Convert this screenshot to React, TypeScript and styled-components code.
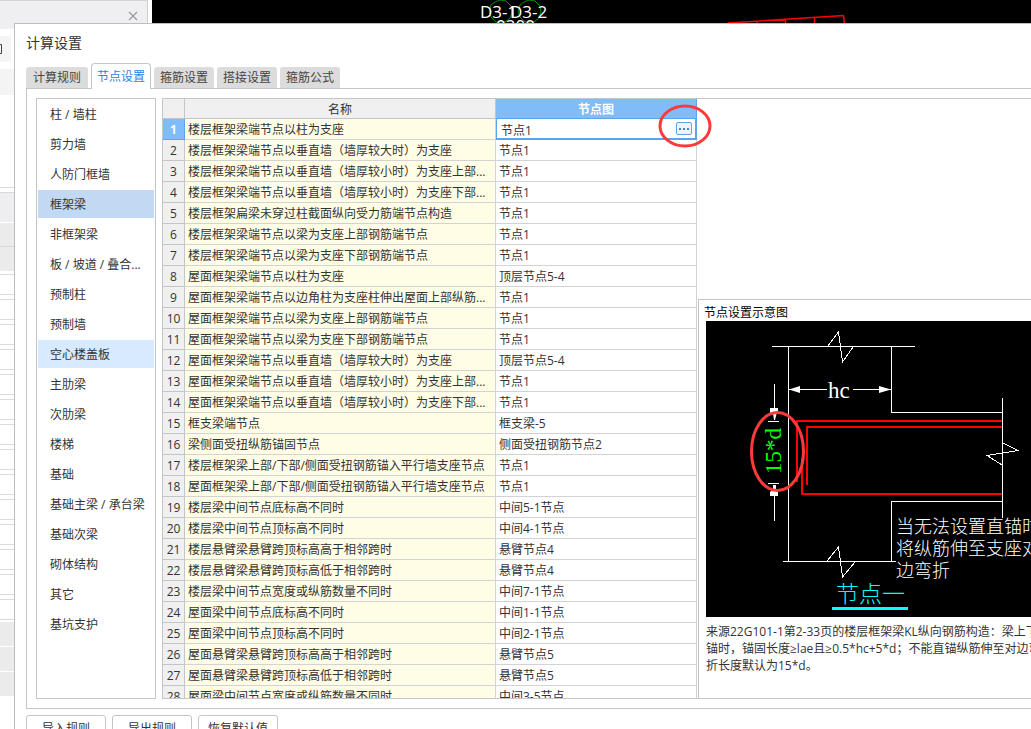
import React, { useState } from "react";
import styled, { createGlobalStyle, css } from "styled-components";

const GlobalStyle = createGlobalStyle`
  *, *::before, *::after { box-sizing: border-box; }
  body {
    margin: 0;
    background: #fff;
    color: #333;
    font: 12px/20px "Open Sans", "Noto Sans CJK SC", sans-serif;
  }
  button, input { font: inherit; color: inherit; }
`;

const line = "#c3c5c8";
const blue = "#5ba3ea";
const lightBlue = "#80bbfa";
const annotation = "#fb3b3b";

const Screen = styled.div`
  display: flex;
  flex-direction: column;
  height: 100vh;
  overflow: hidden;
`;

const Backdrop = styled.div`
  display: flex;
  gap: 4px;
  flex: none;
  height: 23px;
`;

const DockHeader = styled.div`
  display: flex;
  align-items: center;
  justify-content: flex-end;
  width: 148px;
  padding: 8px 9px 0 0;
  background: #efeff1;
  border-top: 1px solid #d4d4d6;
  border-right: 1px solid #cfcfd1;
`;

const CloseButton = styled.button`
  display: flex;
  padding: 0;
  border: 0;
  background: none;
`;

const ModelView = styled.div`
  flex: 1;
  overflow: hidden;
  background: #000;

  svg { display: block; }
`;

const Body = styled.div`
  display: flex;
  flex: 1;
  min-height: 0;
`;

const Dock = styled.div`
  flex: none;
  width: 14px;
`;

const DockBlock = styled.div<{ $h: number; $bg?: string; $top?: boolean; $bottom?: boolean }>`
  height: ${(p) => p.$h}px;
  background: ${(p) => p.$bg ?? "#fff"};
  border-top: ${(p) => (p.$top ? "1px solid #d9d9d9" : 0)};
  border-bottom: ${(p) => (p.$bottom ? "1px solid #d9d9d9" : 0)};
`;

const DockTool = styled.div`
  display: flex;
  align-items: center;
  width: 11px;
  height: 26px;
  margin: 7px 0;
  background: #f4f4f5;
  border-radius: 0 3px 3px 0;
`;

const DockRow = styled.div`
  height: 21px;
  margin-bottom: 4px;
  border: solid #dcdcdc;
  border-width: 1px 0;
`;

const Dialog = styled.section`
  flex: 1;
  min-width: 0;
  padding-left: 11px;
  background: #fff;
  border-top: 1px solid #bdbdbf;
  border-left: 1px solid #bdbdbf;
`;

const Title = styled.h1`
  margin: 0;
  padding-bottom: 2px;
  font-size: 14px;
  line-height: 37px;
  font-weight: 400;
`;

const Tabs = styled.div`
  display: flex;
  align-items: flex-end;
  gap: 3px;
  height: 25px;
`;

const Tab = styled.button<{ $active: boolean }>`
  height: 21px;
  padding: 0 6px;
  line-height: 21px;
  color: #444;
  background: #dcdcdc;
  border: 0;
  border-radius: 3px 3px 0 0;

  &:first-child { padding: 0 7px; }

  ${(p) =>
    p.$active &&
    css`
      z-index: 1;
      height: 26px;
      margin-bottom: -1px;
      padding: 0 5px;
      color: #2b82e6;
      background: #fff;
      border: 1px solid ${line};
      border-bottom: 0;
      border-radius: 4px 4px 0 0;
    `}
`;

const Panel = styled.div`
  display: flex;
  gap: 6px;
  height: calc(100vh - 108px);
  padding: 9px 0 9px 9px;
  border: 1px solid ${line};
  border-right: 0;
`;

const Categories = styled.nav`
  display: flex;
  flex-direction: column;
  gap: 2px;
  flex: none;
  width: 120px;
  padding: 1px;
  overflow: hidden;
  border: 1px solid ${line};
`;

const Category = styled.button<{ $state?: "selected" | "hover" }>`
  flex: none;
  height: 28px;
  padding: 2px 0 0 12px;
  text-align: left;
  white-space: nowrap;
  border: 0;
  background: ${(p) =>
    p.$state === "selected" ? "#c1d9f2" : p.$state === "hover" ? "#d8eaff" : "transparent"};
`;

const Panes = styled.div`
  display: flex;
  gap: 1px;
  flex: 1;
  min-width: 0;
  border: solid ${line};
  border-width: 1px 0;
`;

const GridPane = styled.div`
  z-index: 1;
  flex: none;
  width: 535px;
  overflow-x: visible;
  overflow-y: clip;
  border-left: 1px solid ${line};
`;

const Grid = styled.table`
  width: 100%;
  table-layout: fixed;
  border-collapse: separate;
  border-spacing: 0;
  line-height: 18px;
`;

const HeadCell = styled.th<{ $active?: boolean; $w: number }>`
  width: ${(p) => p.$w}px;
  height: 20px;
  padding: 2px 0 0;
  line-height: 17px;
  font-weight: ${(p) => (p.$active ? 700 : 400)};
  color: ${(p) => (p.$active ? "#fff" : "#333")};
  background: ${(p) => (p.$active ? lightBlue : "#f0f0f0")};
  border: solid ${(p) => (p.$active ? blue : line)};
  border-width: 0 1px 1px 0;
`;

const RowNumber = styled.th<{ $active: boolean }>`
  height: 21px;
  padding: 2px 0 0;
  font-weight: ${(p) => (p.$active ? 700 : 400)};
  color: ${(p) => (p.$active ? "#fff" : "#333")};
  background: ${(p) => (p.$active ? lightBlue : "#f0f0f0")};
  border: solid ${(p) => (p.$active ? blue : line)};
  border-width: 0 1px 1px 0;
`;

const Cell = styled.td<{ $tinted?: boolean }>`
  height: 21px;
  padding: 2px 0 0 3px;
  white-space: nowrap;
  background: ${(p) => (p.$tinted ? "#fffde6" : "#fff")};
  border: solid #d3d3d3;
  border-width: 0 1px 1px 0;
`;

const EditCell = styled.td`
  position: relative;
  height: 21px;
  padding: 0;
`;

const Editor = styled.div`
  display: flex;
  align-items: center;
  height: 21px;
  padding-right: 3px;
  border: 1px solid ${blue};
  border-width: 0 2px 2px 1px;
`;

const EditInput = styled.input`
  flex: 1;
  min-width: 0;
  height: 19px;
  padding: 2px 0 0 4px;
  border: 0;
  outline: 0;
  background: none;
`;

const MoreButton = styled.button`
  display: flex;
  align-items: center;
  justify-content: center;
  gap: 2px;
  width: 16px;
  height: 13px;
  padding: 0;
  background: #eef3fa;
  border: 1px solid ${blue};
  border-radius: 2px;

  span { width: 2px; height: 2px; background: #3f86d8; }
`;

const Highlight = styled.svg`
  position: absolute;
  top: -15px;
  right: -15px;
  pointer-events: none;
`;

const SidePane = styled.div`
  display: flex;
  flex-direction: column;
  flex: 1;
  min-width: 0;
  padding-top: 200px;
`;

const Preview = styled.figure`
  flex: 1;
  min-height: 0;
  margin: 0;
  padding: 4px 0 0 7px;
  overflow: hidden;
  border: solid ${line};
  border-width: 1px 0 0 1px;
`;

const PreviewTitle = styled.h2`
  margin: 0 0 0 -2px;
  font-size: 12px;
  line-height: 17px;
  font-weight: 400;
  color: #000;
`;

const Drawing = styled.svg`
  display: block;
  background: #000;
`;

const Note = styled.figcaption`
  padding-top: 6px;
  line-height: 17px;
  white-space: nowrap;
`;

const Actions = styled.div`
  display: flex;
  gap: 6px;
  padding-top: 6px;
`;

const ActionButton = styled.button`
  width: 80px;
  height: 26px;
  padding: 2px 0 0;
  background: #fff;
  border: 1px solid ${line};
  border-radius: 3px;
`;

const tabs = ["计算规则", "节点设置", "箍筋设置", "搭接设置", "箍筋公式"];

const categories = [
  "柱 / 墙柱", "剪力墙", "人防门框墙", "框架梁", "非框架梁", "板 / 坡道 / 叠合...",
  "预制柱", "预制墙", "空心楼盖板", "主肋梁", "次肋梁", "楼梯", "基础",
  "基础主梁 / 承台梁", "基础次梁", "砌体结构", "其它", "基坑支护",
];

const rows: [string, string][] = [
  ["楼层框架梁端节点以柱为支座", "节点1"],
  ["楼层框架梁端节点以垂直墙（墙厚较大时）为支座", "节点1"],
  ["楼层框架梁端节点以垂直墙（墙厚较小时）为支座上部...", "节点1"],
  ["楼层框架梁端节点以垂直墙（墙厚较小时）为支座下部...", "节点1"],
  ["楼层框架扁梁未穿过柱截面纵向受力筋端节点构造", "节点1"],
  ["楼层框架梁端节点以梁为支座上部钢筋端节点", "节点1"],
  ["楼层框架梁端节点以梁为支座下部钢筋端节点", "节点1"],
  ["屋面框架梁端节点以柱为支座", "顶层节点5-4"],
  ["屋面框架梁端节点以边角柱为支座柱伸出屋面上部纵筋...", "节点1"],
  ["屋面框架梁端节点以梁为支座上部钢筋端节点", "节点1"],
  ["屋面框架梁端节点以梁为支座下部钢筋端节点", "节点1"],
  ["屋面框架梁端节点以垂直墙（墙厚较大时）为支座", "顶层节点5-4"],
  ["屋面框架梁端节点以垂直墙（墙厚较小时）为支座上部...", "节点1"],
  ["屋面框架梁端节点以垂直墙（墙厚较小时）为支座下部...", "节点1"],
  ["框支梁端节点", "框支梁-5"],
  ["梁侧面受扭纵筋锚固节点", "侧面受扭钢筋节点2"],
  ["楼层框架梁上部/下部/侧面受扭钢筋锚入平行墙支座节点", "节点1"],
  ["屋面框架梁上部/下部/侧面受扭钢筋锚入平行墙支座节点", "节点1"],
  ["楼层梁中间节点底标高不同时", "中间5-1节点"],
  ["楼层梁中间节点顶标高不同时", "中间4-1节点"],
  ["楼层悬臂梁悬臂跨顶标高高于相邻跨时", "悬臂节点4"],
  ["楼层悬臂梁悬臂跨顶标高低于相邻跨时", "悬臂节点4"],
  ["楼层梁中间节点宽度或纵筋数量不同时", "中间7-1节点"],
  ["屋面梁中间节点底标高不同时", "中间1-1节点"],
  ["屋面梁中间节点顶标高不同时", "中间2-1节点"],
  ["屋面悬臂梁悬臂跨顶标高高于相邻跨时", "悬臂节点5"],
  ["屋面悬臂梁悬臂跨顶标高低于相邻跨时", "悬臂节点5"],
  ["屋面梁中间节点宽度或纵筋数量不同时", "中间3-5节点"],
];

function ModelDrawing() {
  return (
    <svg width="879" height="23" viewBox="152 0 879 23">
      <g fill="none" stroke="#0a8a0a" strokeWidth="1">
        <path d="M495 2l5-2 6 1 5 5 1 6-2 6-5 4h-9l-5-5-2-6 2-6z" />
        <path d="M524 2l5-2 6 1 5 5 1 6-2 6-5 4h-9l-5-5-2-6 2-6z" />
      </g>
      <g fill="#fff" fontFamily="Open Sans, sans-serif" fontSize="17">
        <text x="480" y="18">D3-1</text>
        <text x="510" y="18">D3-2</text>
        <text x="496" y="32">0200</text>
      </g>
      <path
        d="M728 23L844 15.500M757 23v-2M785.500 23v-3.500M814.500 23v-5M843.500 15.500l1 8"
        fill="none"
        stroke="#f00"
        strokeWidth="1.500"
      />
    </svg>
  );
}

/** Beam end node: column outline, bent bars and the anchorage dimension. */
function NodeDrawing() {
  return (
    <Drawing width="420" height="296" viewBox="706 321 420 296" role="img" aria-label="节点一">
      <g fill="none" stroke="#fff" strokeWidth="1" shapeRendering="crispEdges">
        <path d="M772 346.500H915M788.500 346V561M891.500 346V412.500H1002M1002.500 398V518M1002 501.500H891.500V561M783 561.500H896" />
        <path d="M828 346L838.500 332L842.500 362L853 347M827 561L838.500 547L842.500 577L855 562M1003 443L1018 450.500L987 455.500L1002 465" />
        <path d="M789 389.500H827M853 389.500H891M774.500 384V410M774.500 495V521M768 421.500H779M768 483.500H779" />
      </g>
      <g fill="#fff">
        <path d="M789 389.500L800 386v7zM891 389.500L879 386v7z" />
        <path d="M770 408h8v4h-1l-2 8h-1l-1-7h-3zM773 485h3v5l2 2v4h-8v-4l3-2z" />
      </g>
      <g fill="none" stroke="#f00" strokeWidth="2" shapeRendering="crispEdges">
        <path d="M1002 421H797V482" />
        <path d="M1002 427H807V485" />
        <path d="M802 458V494H1002" />
      </g>
      <g fontFamily="Liberation Serif, serif" fontSize="23">
        <text x="828" y="398" fill="#fff">hc</text>
        <text transform="translate(781 474) rotate(-90)" fill="#0f0">15*d</text>
      </g>
      <g fill="#fff" fontFamily="Noto Sans CJK SC, sans-serif" fontWeight="300" fontSize="18">
        <text x="896" y="533">当无法设置直锚时，</text>
        <text x="896" y="555">将纵筋伸至支座对</text>
        <text x="896" y="577">边弯折</text>
      </g>
      <text x="836" y="602" fill="#0ff" fontFamily="Noto Sans CJK SC, sans-serif" fontWeight="300" fontSize="23">
        节点一
      </text>
      <path d="M832 608.500H908" stroke="#0ff" strokeWidth="3" />
      <ellipse cx="777.500" cy="451.500" rx="26" ry="39" fill="none" stroke={annotation} strokeWidth="3" />
    </Drawing>
  );
}

export default function App() {
  const [tab, setTab] = useState(1);
  const [category, setCategory] = useState(3);
  const [node, setNode] = useState(rows[0][1]);

  return (
    <Screen>
      <GlobalStyle />
      <Backdrop>
        <DockHeader>
          <CloseButton aria-label="关闭">
            <svg width="10" height="10" viewBox="0 0 10 10" stroke="#999" strokeWidth="1.200">
              <path d="M1 1l8 8M9 1l-8 8" />
            </svg>
          </CloseButton>
        </DockHeader>
        <ModelView>
          <ModelDrawing />
        </ModelView>
      </Backdrop>
      <Body>
        <Dock>
          <DockBlock $h={6} $bg="#efeff1" />
          <DockTool>
            <svg width="3" height="12" fill="none" stroke="#444">
              <path d="M0 1.500h1.500v9H0" />
            </svg>
          </DockTool>
          <DockBlock $h={26} $bg="#f4f4f5" />
          <DockBlock $h={93} $bottom />
          <DockBlock $h={4} />
          <DockBlock $h={30} $bg="#eeeef0" $top />
          <DockBlock $h={1} />
          <DockBlock $h={23} $bg="#ebebeb" />
          <DockBlock $h={25} $bg="#ebebeb" $top />
          <DockBlock $h={3} />
          {Array.from({ length: 13 }, (_, i) => (
            <DockRow key={i} />
          ))}
          <DockBlock $h={21} $top $bottom />
          <DockBlock $h={2} />
          <DockBlock $h={24} $bg="#ebebeb" />
          <DockBlock $h={1} />
          <DockBlock $h={24} $bg="#ebebeb" />
          <DockBlock $h={1} />
          <DockBlock $h={24} $bg="#ebebeb" />
        </Dock>
        <Dialog>
          <Title>计算设置</Title>
          <Tabs role="tablist">
            {tabs.map((label, i) => (
              <Tab key={label} role="tab" aria-selected={i === tab} $active={i === tab} onClick={() => setTab(i)}>
                {label}
              </Tab>
            ))}
          </Tabs>
          <Panel>
            <Categories>
              {categories.map((label, i) => (
                <Category
                  key={label}
                  $state={i === category ? "selected" : i === 8 ? "hover" : undefined}
                  onClick={() => setCategory(i)}
                >
                  {label}
                </Category>
              ))}
            </Categories>
            <Panes>
              <GridPane>
                <Grid>
                  <thead>
                    <tr>
                      <HeadCell $w={22} />
                      <HeadCell $w={311} scope="col">名称</HeadCell>
                      <HeadCell $w={201} scope="col" $active>节点图</HeadCell>
                    </tr>
                  </thead>
                  <tbody>
                    {rows.map(([name, value], i) => (
                      <tr key={name}>
                        <RowNumber scope="row" $active={i === 0}>{i + 1}</RowNumber>
                        <Cell $tinted>{name}</Cell>
                        {i === 0 ? (
                          <EditCell>
                            <Editor>
                              <EditInput
                                aria-label="节点图"
                                value={node}
                                onChange={(e) => setNode(e.target.value)}
                              />
                              <MoreButton aria-label="选择节点图">
                                <span />
                                <span />
                                <span />
                              </MoreButton>
                            </Editor>
                            <Highlight width="54" height="45" fill="none" stroke={annotation} strokeWidth="3">
                              <ellipse cx="27" cy="22" rx="25" ry="20" />
                            </Highlight>
                          </EditCell>
                        ) : (
                          <Cell>{value}</Cell>
                        )}
                      </tr>
                    ))}
                  </tbody>
                </Grid>
              </GridPane>
              <SidePane>
                <Preview>
                  <PreviewTitle>节点设置示意图</PreviewTitle>
                  <NodeDrawing />
                  <Note>
                    来源22G101-1第2-33页的楼层框架梁KL纵向钢筋构造：梁上下
                    <br />
                    锚时，锚固长度≥lae且≥0.5*hc+5*d；不能直锚纵筋伸至对边弯
                    <br />
                    折长度默认为15*d。
                  </Note>
                </Preview>
              </SidePane>
            </Panes>
          </Panel>
          <Actions>
            <ActionButton>导入规则</ActionButton>
            <ActionButton>导出规则</ActionButton>
            <ActionButton>恢复默认值</ActionButton>
          </Actions>
        </Dialog>
      </Body>
    </Screen>
  );
}
